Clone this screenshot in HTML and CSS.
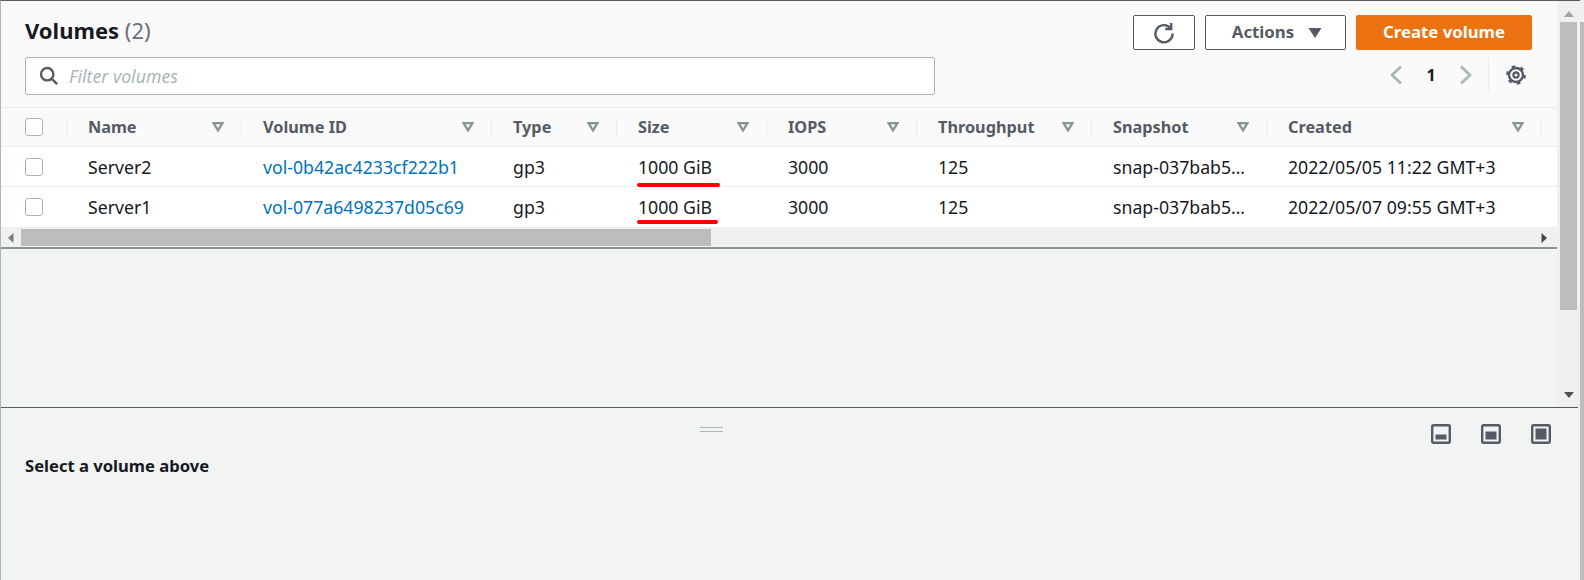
FILE: index.html
```html
<!DOCTYPE html>
<html lang="en">
<head>
<meta charset="utf-8">
<title>Volumes</title>
<link rel="stylesheet" href="styles.css">
</head>
<body>
<div class="app">
  <div class="main">
    <div class="upper">
      <div class="content">
        <div class="head">
          <div class="head-row">
            <h1 class="title">Volumes <span class="count">(2)</span></h1>
            <div class="actions">
              <button class="btn btn-icon">
                <svg width="22" height="22" viewBox="0 0 22 22" fill="none" stroke="#545b64" stroke-width="2.4"><path d="M17.6 6.2A8.6 8.6 0 1 0 19.6 11.5"/><path d="M18.2 1v6H12.2"/></svg>
              </button>
              <button class="btn btn-actions">Actions
                <svg width="16" height="12" viewBox="0 0 16 12"><path d="M1.5 1h13L8 11z" fill="#545b64"/></svg>
              </button>
              <button class="btn btn-primary">Create volume</button>
            </div>
          </div>
          <div class="head-row head-row-second">
            <div class="filter">
              <svg width="20" height="20" viewBox="0 0 20 20" fill="none" stroke="#545b64" stroke-width="2.4"><circle cx="8.2" cy="8.2" r="6.2"/><path d="M12.8 12.8l5.4 5.4"/></svg>
              <span class="placeholder">Filter volumes</span>
            </div>
            <div class="pager">
              <svg class="chev" width="12" height="20" viewBox="0 0 12 20" fill="none" stroke="#aab7b8" stroke-width="2.8"><path d="M11 1.5L2 10l9 8.5"/></svg>
              <span class="page">1</span>
              <svg class="chev" width="12" height="20" viewBox="0 0 12 20" fill="none" stroke="#aab7b8" stroke-width="2.8"><path d="M1 1.5L10 10l-9 8.5"/></svg>
              <span class="pager-sep"></span>
              <svg class="gear" width="22" height="22" viewBox="0 0 22 22" fill="none" stroke="#545b64"><circle cx="11" cy="11" r="7" stroke-width="2.4"/><circle cx="11" cy="11" r="2.6" stroke-width="2.2"/><circle cx="11" cy="11" r="8.8" stroke-width="2.2" stroke-dasharray="3.6 5.6"/></svg>
            </div>
          </div>
        </div>

        <div class="row row-head">
          <div class="cell-head cell-check"><span class="check"></span></div>
          <div class="cell-head">Name <svg class="tri" width="12" height="10" viewBox="0 0 12 10"><path d="M1.6 1.1h8.8L6 8.4z" fill="none" stroke="#879596" stroke-width="2.3"/></svg></div>
          <div class="cell-head">Volume ID <svg class="tri" width="12" height="10" viewBox="0 0 12 10"><path d="M1.6 1.1h8.8L6 8.4z" fill="none" stroke="#879596" stroke-width="2.3"/></svg></div>
          <div class="cell-head">Type <svg class="tri" width="12" height="10" viewBox="0 0 12 10"><path d="M1.6 1.1h8.8L6 8.4z" fill="none" stroke="#879596" stroke-width="2.3"/></svg></div>
          <div class="cell-head">Size <svg class="tri" width="12" height="10" viewBox="0 0 12 10"><path d="M1.6 1.1h8.8L6 8.4z" fill="none" stroke="#879596" stroke-width="2.3"/></svg></div>
          <div class="cell-head">IOPS <svg class="tri" width="12" height="10" viewBox="0 0 12 10"><path d="M1.6 1.1h8.8L6 8.4z" fill="none" stroke="#879596" stroke-width="2.3"/></svg></div>
          <div class="cell-head">Throughput <svg class="tri" width="12" height="10" viewBox="0 0 12 10"><path d="M1.6 1.1h8.8L6 8.4z" fill="none" stroke="#879596" stroke-width="2.3"/></svg></div>
          <div class="cell-head">Snapshot <svg class="tri" width="12" height="10" viewBox="0 0 12 10"><path d="M1.6 1.1h8.8L6 8.4z" fill="none" stroke="#879596" stroke-width="2.3"/></svg></div>
          <div class="cell-head">Created <svg class="tri" width="12" height="10" viewBox="0 0 12 10"><path d="M1.6 1.1h8.8L6 8.4z" fill="none" stroke="#879596" stroke-width="2.3"/></svg></div>
        </div>

        <div class="row row-body">
          <div class="cell cell-check"><span class="check"></span></div>
          <div class="cell">Server2</div>
          <div class="cell"><a class="link">vol-0b42ac4233cf222b1</a></div>
          <div class="cell">gp3</div>
          <div class="cell">1000 GiB<span class="mark mark-a"></span></div>
          <div class="cell">3000</div>
          <div class="cell">125</div>
          <div class="cell">snap-037bab5…</div>
          <div class="cell">2022/05/05 11:22 GMT+3</div>
        </div>
        <div class="row row-body row-last">
          <div class="cell cell-check"><span class="check"></span></div>
          <div class="cell">Server1</div>
          <div class="cell"><a class="link">vol-077a6498237d05c69</a></div>
          <div class="cell">gp3</div>
          <div class="cell">1000 GiB<span class="mark mark-b"></span></div>
          <div class="cell">3000</div>
          <div class="cell">125</div>
          <div class="cell">snap-037bab5…</div>
          <div class="cell">2022/05/07 09:55 GMT+3</div>
        </div>

        <div class="hscroll">
          <svg class="arrow-l" width="6" height="10" viewBox="0 0 6 10"><path d="M5.5 0v10L0 5z" fill="#7d7d7d"/></svg>
          <div class="hthumb"></div>
          <svg class="arrow-r" width="6" height="10" viewBox="0 0 6 10"><path d="M.5 0v10L6 5z" fill="#444"/></svg>
        </div>
      </div>
      <div class="vscroll">
        <svg class="arrow-up" width="10" height="6" viewBox="0 0 10 6"><path d="M0 6h10L5 0z" fill="#a3a3a3"/></svg>
        <div class="vthumb"></div>
        <svg class="arrow-down" width="10" height="6" viewBox="0 0 10 6"><path d="M0 0h10L5 6z" fill="#505050"/></svg>
      </div>
    </div>
    <div class="lower">
      <div class="grip"></div>
      <div class="lower-body">
        <p class="select">Select a volume above</p>
        <div class="panes">
          <svg width="20" height="20" viewBox="0 0 20 20"><rect x="1.2" y="1.2" width="17.6" height="17.6" rx="1.5" fill="none" stroke="#545b64" stroke-width="2.4"/><rect x="4.5" y="10.5" width="11" height="5" fill="#545b64"/></svg>
          <svg width="20" height="20" viewBox="0 0 20 20"><rect x="1.2" y="1.2" width="17.6" height="17.6" rx="1.5" fill="none" stroke="#545b64" stroke-width="2.4"/><rect x="4.5" y="7.5" width="11" height="8" fill="#545b64"/></svg>
          <svg width="20" height="20" viewBox="0 0 20 20"><rect x="1.2" y="1.2" width="17.6" height="17.6" rx="1.5" fill="none" stroke="#545b64" stroke-width="2.4"/><rect x="4.5" y="4.5" width="11" height="11" fill="#545b64"/></svg>
        </div>
      </div>
    </div>
  </div>
  <div class="outer-scroll"><div class="outer-thumb"></div></div>
</div>
</body>
</html>
```
FILE: styles.css
```css
* { box-sizing: border-box; }
html, body { margin: 0; padding: 0; }
body {
  font-family: "Noto Sans", "Liberation Sans", sans-serif;
  font-size: 17.7px;
  color: #16191f;
  background: #f2f3f3;
}
.app { display: flex; width: 1584px; height: 580px; overflow: hidden; }
.main {
  width: 1580px;
  display: flex;
  flex-direction: column;
  border-top: 1px solid #545b64;
  border-left: 1px solid #aab7b8;
  background: #f2f3f3;
}
.upper { display: flex; height: 406px; }
.content { width: 1556px; display: flex; flex-direction: column; }
.head {
  height: 107px;
  padding: 14px 25px 0 24px;
  background: #fafafa;
  border-bottom: 1px solid #eaeded;
}
.head-row { display: flex; justify-content: space-between; align-items: flex-start; }
.head-row-second { margin-top: 7px; }
.title { margin: 0; font-size: 22px; line-height: 30px; font-weight: 700; }
.count { font-weight: 400; color: #687078; }
.actions { display: flex; gap: 10px; }
.btn {
  height: 35px;
  font: 700 16.8px/1 "Noto Sans", sans-serif;
  border: 1px solid #545b64;
  border-radius: 2px;
  background: #fff;
  color: #545b64;
  display: flex;
  align-items: center;
  justify-content: center;
  padding: 0;
}
.btn-actions { width: 141px; gap: 13px; padding-left: 4px; }
.btn-icon { width: 62px; }
.btn-primary { width: 176px; background: #ec7211; border-color: #ec7211; color: #fff; }
.filter {
  width: 910px;
  height: 38px;
  display: flex;
  align-items: center;
  gap: 10px;
  padding-left: 13px;
  background: #fff;
  border: 1px solid #aab7b8;
  border-radius: 2px;
}
.placeholder { font-style: italic; color: #aab7b8; }
.pager { display: flex; align-items: center; height: 35px; }
.page { width: 58px; text-align: center; font-weight: 700; font-size: 16px; }
.pager-sep { width: 1px; height: 35px; background: #eaeded; margin: 0 16px; }
.gear { margin-right: 5px; }
.row {
  display: grid;
  grid-template-columns: 66px 175px 250px 125px 150px 150px 175px 175px 275px 15px;
  align-items: center;
}
.row-head {
  height: 39px;
  background: #fafafa;
  border-bottom: 1px solid #eaeded;
  color: #545b64;
  font-size: 16.3px;
  font-weight: 700;
}
.cell-head {
  height: 19px;
  line-height: 19px;
  padding: 0 17px 0 21px;
  display: flex;
  justify-content: space-between;
  align-items: center;
  border-right: 1px solid #eaeded;
  white-space: nowrap;
}
.tri { flex: none; }
.row-body { height: 40px; background: #fff; border-bottom: 1px solid #eaeded; }
.row-last { border-bottom: 0; }
.cell { padding-left: 21px; line-height: 22px; white-space: nowrap; position: relative; }
.cell-head.cell-check { padding: 0 0 0 24px; justify-content: flex-start; }
.cell-check { padding: 0 0 0 24px; display: flex; align-items: center; }
.check {
  display: block;
  width: 18px;
  height: 18px;
  background: #fff;
  border: 1px solid #aab7b8;
  border-radius: 3px;
}
.link { color: #0073bb; }
.mark { position: absolute; background: #f00; height: 4px; border-radius: 2px; left: 20px; }
.mark-a { top: 27.5px; width: 83px; }
.mark-b { top: 24px; width: 81px; }
.hscroll {
  height: 22px;
  display: flex;
  align-items: flex-start;
  padding: 2px 0 0;
  background: #f0f0f0;
  border-bottom: 2px solid #879596;
}
.arrow-l { margin: 4px 0 0 7px; }
.hthumb { width: 690px; height: 17px; margin-left: 7px; background: #bdbdbd; }
.arrow-r { margin: 4px 10px 0 auto; }
.vscroll {
  width: 23px;
  background: #f0f0f0;
  display: flex;
  flex-direction: column;
  align-items: center;
}
.arrow-up { margin-top: 10px; }
.vthumb { width: 17px; height: 288px; margin-top: 5px; background: #bdbdbd; }
.arrow-down { margin-top: auto; margin-bottom: 9px; }
.lower { flex: 1; margin-right: 2px; border-top: 1px solid #545b64; padding-top: 19px; }
.grip {
  width: 23px;
  height: 5px;
  margin-left: 699px;
  border-top: 1px solid #aab7b8;
  border-bottom: 1px solid #aab7b8;
}
.lower-body { display: flex; justify-content: space-between; align-items: flex-start; margin-top: -8px; padding: 0 27px 0 24px; }
.select { margin: 30px 0 0; font-size: 16.6px; font-weight: 700; line-height: 24px; }
.panes { display: flex; gap: 30px; }
.outer-scroll { width: 4px; background: #f0f0f0; padding-top: 22px; }
.outer-thumb { height: 558px; background: #bdbdbd; }
```
